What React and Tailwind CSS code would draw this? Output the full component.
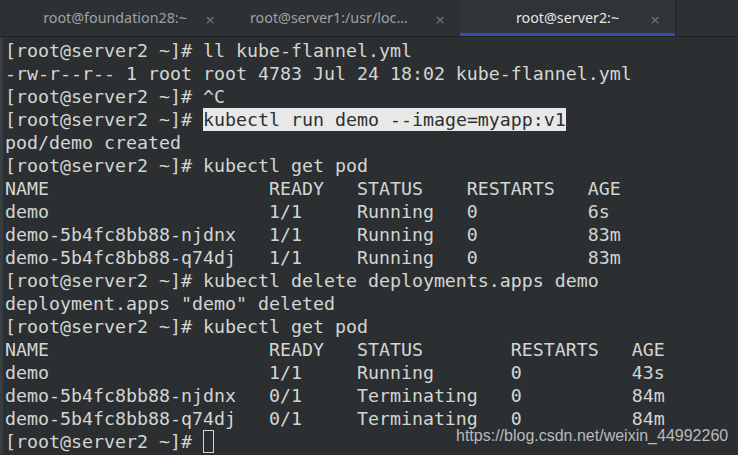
const pad = (s, n) => s.padEnd(n, " ");

const row = (cols, widths) =>
  cols.map((c, i) => (i < widths.length ? pad(c, widths[i]) : c)).join("");

const t1 = [24, 8, 10, 11];
const t2 = [24, 8, 14, 11];
const prompt = "[root@server2 ~]# ";

const lines = [
  prompt + "ll kube-flannel.yml",
  "-rw-r--r-- 1 root root 4783 Jul 24 18:02 kube-flannel.yml",
  prompt + "^C",
  { pre: prompt, mark: "kubectl run demo --image=myapp:v1" },
  "pod/demo created",
  prompt + "kubectl get pod",
  row(["NAME", "READY", "STATUS", "RESTARTS", "AGE"], t1),
  row(["demo", "1/1", "Running", "0", "6s"], t1),
  row(["demo-5b4fc8bb88-njdnx", "1/1", "Running", "0", "83m"], t1),
  row(["demo-5b4fc8bb88-q74dj", "1/1", "Running", "0", "83m"], t1),
  prompt + "kubectl delete deployments.apps demo",
  'deployment.apps "demo" deleted',
  prompt + "kubectl get pod",
  row(["NAME", "READY", "STATUS", "RESTARTS", "AGE"], t2),
  row(["demo", "1/1", "Running", "0", "43s"], t2),
  row(["demo-5b4fc8bb88-njdnx", "0/1", "Terminating", "0", "84m"], t2),
  row(["demo-5b4fc8bb88-q74dj", "0/1", "Terminating", "0", "84m"], t2),
  { pre: prompt, cursor: true },
];

const Tab = ({ title, active, width, label }) => (
  <div
    className={`relative flex items-center h-full ${width} ${
      active ? "bg-[#303436] text-[#e4e6e6]" : "text-[#9ea2a3]"
    }`}
  >
    <div className={label}>{title}</div>
    <span className="absolute right-[15px] top-[7px] text-[#6e7274] text-[17px]">×</span>
    {active && <div className="absolute left-0 right-0 bottom-0 h-[3px] bg-[#3a4da6]" />}
  </div>
);

export default function App() {
  return (
    <div className="w-[738px] h-[455px] overflow-hidden bg-[#2c2f31] flex flex-col">
      {/* tab bar */}
      <div className="h-[37px] shrink-0 flex bg-[#2d3133] border-b border-[#212426] font-['Noto_Sans',sans-serif] text-[14.3px]">
        <Tab title="root@foundation28:~" width="w-[230px]" label="w-full text-center" />
        <Tab title="root@server1:/usr/local/src" width="w-[230px]" label="ml-[20px] w-[160px] truncate" />
        <Tab title="root@server2:~" width="w-[215px]" label="w-full text-center" active />
        <div className="flex-1 border-l border-[#222527]" />
      </div>

      {/* terminal */}
      <div className="relative flex-1 flex">
        <div className="w-[3px] bg-[#3a3d3f]" />
        <div className="pl-[2px] pt-[2px] font-['DejaVu_Sans_Mono',monospace] text-[18.27px] leading-[23px] text-[#d3d6d2] whitespace-pre">
          {lines.map((l, i) =>
            typeof l === "string" ? (
              <div key={i} className="h-[23px]">{l}</div>
            ) : (
              <div key={i} className="h-[23px] flex">
                <span>{l.pre}</span>
                {l.mark && <span className="bg-[#e8e9e7] text-[#2c2f31]">{l.mark}</span>}
                {l.cursor && <span className="w-[11px] h-[23px] border border-[#d3d6d2]" />}
              </div>
            )
          )}
        </div>
        <div className="absolute left-[456px] top-[389px] font-['Liberation_Sans',sans-serif] text-[16px] leading-[20px] text-[#b8babb]">
          https://blog.csdn.net/weixin_44992260
        </div>
      </div>
    </div>
  );
}
